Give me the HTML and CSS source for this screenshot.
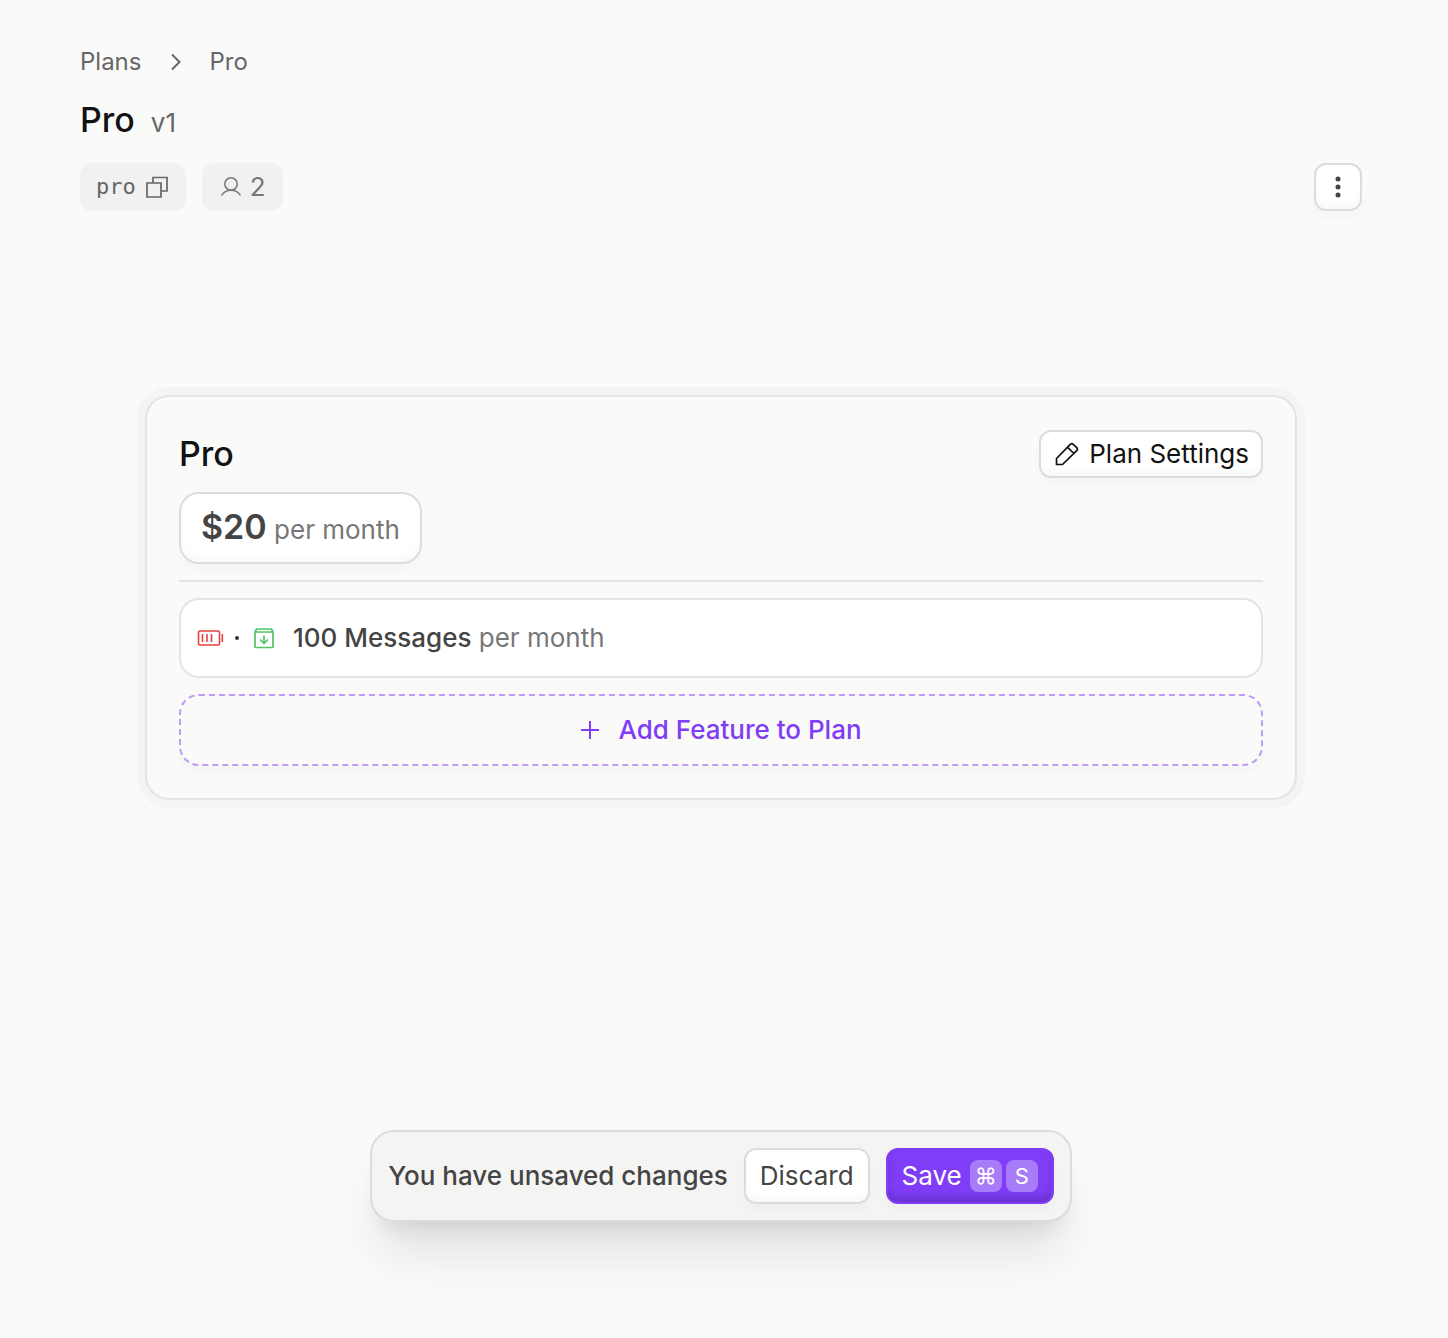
FILE: index.html
```html
<!DOCTYPE html>
<html lang="en">
<head>
  <meta charset="UTF-8">
  <meta name="viewport" content="width=device-width, initial-scale=1.0">
  <title>Pro - Plans</title>
  <link rel="stylesheet" href="styles.css">
</head>
<body>
  <header class="page-header">
    <nav class="breadcrumb" aria-label="Breadcrumb">
      <a href="#">Plans</a>
      <svg width="12" height="18" viewBox="0 0 12 18" fill="none" stroke="currentColor" stroke-width="2"><path d="M3 1.500 10.500 9 3 16.500"/></svg>
      <a href="#" aria-current="page">Pro</a>
    </nav>
    <div class="title-row">
      <h1>Pro</h1>
      <span class="version">v1</span>
    </div>
    <div class="meta-row">
      <button class="chip chip-id" type="button">
        <span>pro</span>
        <svg width="24" height="24" viewBox="0 0 24 24" fill="none" stroke="currentColor" stroke-width="1.7"><path d="M2 8h14v14H2zM8 8V2.500h14V16h-6"/></svg>
      </button>
      <button class="chip" type="button">
        <svg width="24" height="24" viewBox="0 0 24 24" fill="none" stroke="currentColor" stroke-width="1.5"><circle cx="12" cy="9" r="6.200"/><path d="M2.500 20.500C4.500 17 8 15.200 12 15.200s7.500 1.800 9.500 5.300"/></svg>
        <span>2</span>
      </button>
      <button class="btn btn-icon" type="button" aria-label="More options">
        <svg width="24" height="24" viewBox="0 0 24 24" fill="currentColor"><circle cx="12" cy="4" r="2.500"/><circle cx="12" cy="12" r="2.500"/><circle cx="12" cy="20" r="2.500"/></svg>
      </button>
    </div>
  </header>

  <main class="canvas">
    <section class="plan-card">
      <div class="plan-head">
        <h2>Pro</h2>
        <button class="btn btn-settings" type="button">
          <svg width="24" height="24" viewBox="0 0 24 24" fill="none" stroke="currentColor" stroke-width="1.7" stroke-linejoin="round"><path d="M1.500 22.500v-6L15.300 2.300a2.200 2.200 0 0 1 3 0l3.400 3.400a2.200 2.200 0 0 1 0 3L7.500 22.500zM12.500 5.200l6.300 6.300"/></svg>
          Plan Settings
        </button>
      </div>
      <button class="price" type="button"><strong>$20</strong> <span>per month</span></button>
      <hr>
      <div class="feature">
        <svg class="icon-battery" width="28" height="24" viewBox="0 0 28 24" fill="none" stroke="currentColor" stroke-width="1.600"><rect x="1.500" y="5" width="21" height="14" rx="1.500"/><path d="M5.500 8v8M10 8v8M14.500 8v8M25.300 8v8"/></svg>
        <span class="dot"></span>
        <svg class="icon-box" width="24" height="24" viewBox="0 0 24 24" fill="none" stroke="currentColor" stroke-width="1.700" stroke-linejoin="round"><path d="M3 6h18v14.500a1 1 0 0 1-1 1H4a1 1 0 0 1-1-1zM3 6l1.500-3h15L21 6M12 9.500v8M8 13.500l4 4 4-4"/></svg>
        <p><b>100 Messages</b> per month</p>
      </div>
      <button class="add-feature" type="button">
        <svg width="20" height="20" viewBox="0 0 20 20" fill="none" stroke="currentColor" stroke-width="2"><path d="M10 1v18M1 10h18"/></svg>
        Add Feature to Plan
      </button>
    </section>
  </main>

  <footer class="save-bar">
    <span class="save-text">You have unsaved changes</span>
    <button class="btn btn-discard" type="button">Discard</button>
    <button class="btn-save" type="button">Save <span class="keys"><kbd>⌘</kbd><kbd>S</kbd></span></button>
  </footer>
</body>
</html>
```
FILE: styles.css
```css
* {
  box-sizing: border-box;
}
body {
  margin: 0;
  min-height: 100vh;
  padding: 44px 86px 116px 80px;
  display: flex;
  flex-direction: column;
  background-color: #fafaf9;
  color: #444;
  font-family: Inter, sans-serif;
  font-size: 26px;
  line-height: 36px;
}
h1, h2, p {
  margin: 0;
}
h1, h2 {
  color: #121212;
  font-size: 34px;
  font-weight: 500;
  line-height: 48px;
}
svg {
  display: block;
  flex-shrink: 0;
}
button {
  margin: 0;
  font: inherit;
  color: inherit;
  cursor: pointer;
}

/* Header */
.breadcrumb {
  display: flex;
  align-items: center;
  gap: 28px;
  color: #666;
  font-size: 24px;
}
.breadcrumb a {
  color: inherit;
  text-decoration: none;
}
.title-row {
  display: flex;
  align-items: baseline;
  gap: 16px;
  margin-top: 16px;
}
.version {
  color: #666;
}
.meta-row {
  display: flex;
  gap: 16px;
  margin-top: 19px;
}
.chip {
  display: flex;
  align-items: center;
  gap: 7px;
  height: 48px;
  padding: 0 17px;
  border: none;
  border-radius: 12px;
  background-color: #f1f1f1;
  color: #777;
}
.chip-id {
  gap: 9px;
  padding: 0 17px 0 16px;
  color: #666;
  font-family: "DejaVu Sans Mono", monospace;
  font-size: 22px;
}

/* Buttons */
.btn {
  display: flex;
  align-items: center;
  justify-content: center;
  border: 2px solid #dcdcdc;
  border-radius: 12px;
  background-color: #fff;
  box-shadow: 0 8px 8px rgba(0, 0, 0, 0.02), inset 0 -6px 10px -2px rgba(0, 0, 0, 0.03);
}
.btn-icon {
  width: 48px;
  height: 48px;
  margin-left: auto;
  padding: 0;
}
.btn-settings {
  gap: 10px;
  height: 48px;
  padding: 0 12px 0 14px;
  color: #121212;
}
.btn-discard {
  height: 56px;
  padding: 0 14px;
}
.btn-save {
  display: flex;
  align-items: center;
  gap: 8px;
  height: 56px;
  padding: 0 14px;
  border: 2px solid #803df5;
  border-radius: 12px;
  background-color: #7f3df7;
  box-shadow: 0 8px 8px rgba(0, 0, 0, 0.02), inset 0 -6px 10px -2px rgba(0, 0, 0, 0.2);
  color: #fff;
}
.keys {
  display: flex;
  gap: 4px;
}
kbd {
  width: 32px;
  height: 32px;
  border-radius: 8px;
  background-color: #a87bf8;
  font-family: inherit;
  font-size: 22px;
  line-height: 32px;
  text-align: center;
}

/* Plan card */
.canvas {
  flex: 1;
  padding: 184px 0 64px;
}
.plan-card {
  max-width: 1152px;
  margin: 0 auto;
  padding: 33px 32px 32px;
  border: 2px solid #e4e4e3;
  border-radius: 24px;
  box-shadow: 0 0 0 8px #f4f4f3;
}
.plan-head {
  display: flex;
  align-items: center;
  justify-content: space-between;
}
.price {
  height: 72px;
  margin-top: 14px;
  padding: 0 20px;
  border: 2px solid #dcdcdc;
  border-radius: 20px;
  background-color: #fff;
  box-shadow: 0 8px 8px rgba(0, 0, 0, 0.02), inset 0 -6px 10px -2px rgba(0, 0, 0, 0.03);
  color: #777;
}
.price strong {
  color: #444;
  font-size: 34px;
  font-weight: 600;
}
hr {
  height: 2px;
  margin: 16px 0;
  border: none;
  background-color: #e4e4e3;
}
.feature {
  display: flex;
  align-items: center;
  height: 80px;
  padding: 0 16px;
  border: 2px solid #e4e4e3;
  border-radius: 20px;
  background-color: #fff;
  color: #777;
}
.feature b {
  color: #444;
  font-weight: 500;
}
.feature p {
  margin-left: 17px;
}
.icon-battery {
  color: #e8403c;
}
.icon-box {
  color: #50c466;
}
.dot {
  width: 4px;
  height: 4px;
  margin: 0 13px 0 10px;
  border-radius: 50%;
  background-color: #333;
}
.add-feature {
  display: flex;
  align-items: center;
  justify-content: center;
  gap: 18px;
  width: 100%;
  height: 72px;
  margin-top: 16px;
  border: 2px dashed #bd9bf6;
  border-radius: 20px;
  background-color: #fafaf9;
  box-shadow: 0 8px 8px rgba(0, 0, 0, 0.02);
  color: #7f3df7;
  font-weight: 500;
}

/* Unsaved changes */
.save-bar {
  display: flex;
  align-items: center;
  align-self: center;
  gap: 16px;
  padding: 16px;
  border: 2px solid #dcdcdc;
  border-radius: 24px;
  background-color: #f4f4f3;
  box-shadow: 0 40px 50px -10px rgba(0, 0, 0, 0.1), 0 16px 20px -12px rgba(0, 0, 0, 0.1);
}
.save-text {
  font-weight: 500;
}
```
